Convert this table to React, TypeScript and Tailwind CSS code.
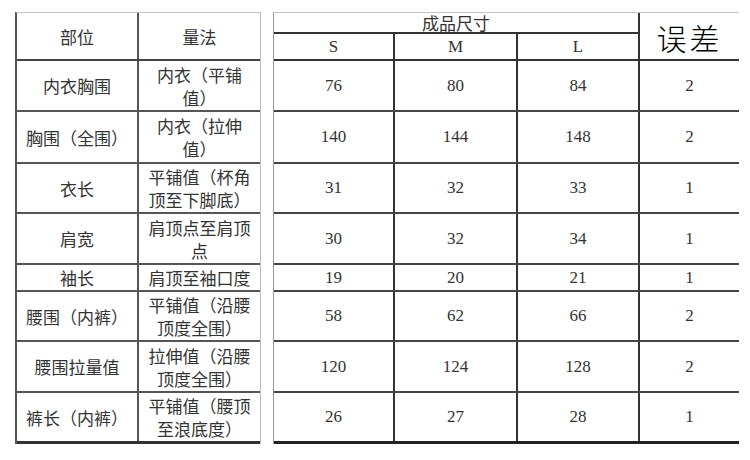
const rows = [
  { part: '内衣胸围', method: '内衣（平铺值）', s: 76, m: 80, l: 84, e: 2, h: 'h-[51px]' },
  { part: '胸围（全围）', method: '内衣（拉伸值）', s: 140, m: 144, l: 148, e: 2, h: 'h-[52px]' },
  { part: '衣长', method: '平铺值（杯角顶至下脚底）', s: 31, m: 32, l: 33, e: 1, h: 'h-[50px]' },
  { part: '肩宽', method: '肩顶点至肩顶点', s: 30, m: 32, l: 34, e: 1, h: 'h-[51px]' },
  { part: '袖长', method: '肩顶至袖口度', s: 19, m: 20, l: 21, e: 1, h: 'h-[27px]' },
  { part: '腰围（内裤）', method: '平铺值（沿腰顶度全围）', s: 58, m: 62, l: 66, e: 2, h: 'h-[50px]' },
  { part: '腰围拉量值', method: '拉伸值（沿腰顶度全围）', s: 120, m: 124, l: 128, e: 2, h: 'h-[51px]' },
  { part: '裤长（内裤）', method: '平铺值（腰顶至浪底度）', s: 26, m: 27, l: 28, e: 1, h: 'h-[51px]' },
]

const cjk = "font-['Noto_Sans_CJK_SC',sans-serif] [text-spacing-trim:space-all]"
const serif = "font-['Liberation_Serif','Noto_Sans_CJK_SC',serif]"

function PartsTable() {
  return (
    <div className={`w-[246px] border-t border-r border-l-2 border-t-[#c4c4c4] border-r-[#bdbdbd] border-l-[#555] text-[17px] leading-[23px] text-[#333] ${cjk}`}>
      <div className="flex h-[48px] border-b-2 border-[#444]">
        <div className="flex w-[122px] items-center justify-center border-r-2 border-[#555]">部位</div>
        <div className="flex flex-1 items-center justify-center">量法</div>
      </div>
      {rows.map((r, i) => (
        <div
          key={r.part}
          className={`flex ${r.h} ${i === rows.length - 1 ? 'border-b-[3px] border-[#333]' : 'border-b-2 border-[#555]'}`}
        >
          <div className="flex w-[122px] items-center justify-center border-r-2 border-[#555] text-center">{r.part}</div>
          <div className="flex flex-1 items-center justify-center px-[5px] text-center">{r.method}</div>
        </div>
      ))}
    </div>
  )
}

function SizeTable() {
  return (
    <div className={`w-[466px] border-t border-l border-t-[#c4c4c4] border-l-[#999] text-[17px] text-[#333] ${serif}`}>
      <div className="flex h-[48px] border-b-2 border-[#333]">
        <div className="flex w-[366px] flex-col border-r-2 border-[#333]">
          <div className={`flex h-[24px] items-center justify-center border-b-2 border-[#333] leading-none ${cjk}`}>成品尺寸</div>
          <div className="flex flex-1">
            <div className="flex w-[121px] items-center justify-center border-r-2 border-[#333]">S</div>
            <div className="flex w-[123px] items-center justify-center border-r-2 border-[#333]">M</div>
            <div className="flex flex-1 items-center justify-center">L</div>
          </div>
        </div>
        <div className={`flex flex-1 items-center justify-center pt-[2px] text-[30px] font-light tracking-[3px] text-black ${cjk}`}>误差</div>
      </div>
      {rows.map((r, i) => (
        <div
          key={r.part}
          className={`flex ${r.h} ${i === rows.length - 1 ? 'border-b-[3px] border-[#222]' : 'border-b-2 border-[#444]'}`}
        >
          <div className="flex w-[121px] items-center justify-center border-r-2 border-[#333]">{r.s}</div>
          <div className="flex w-[123px] items-center justify-center border-r-2 border-[#333]">{r.m}</div>
          <div className="flex w-[122px] items-center justify-center border-r-2 border-[#333]">{r.l}</div>
          <div className="flex flex-1 items-center justify-center">{r.e}</div>
        </div>
      ))}
    </div>
  )
}

export default function App() {
  return (
    <div className="flex h-[460px] w-[750px] items-start gap-[12px] bg-white pt-[12px] pl-[15px]">
      <PartsTable />
      <SizeTable />
    </div>
  )
}
